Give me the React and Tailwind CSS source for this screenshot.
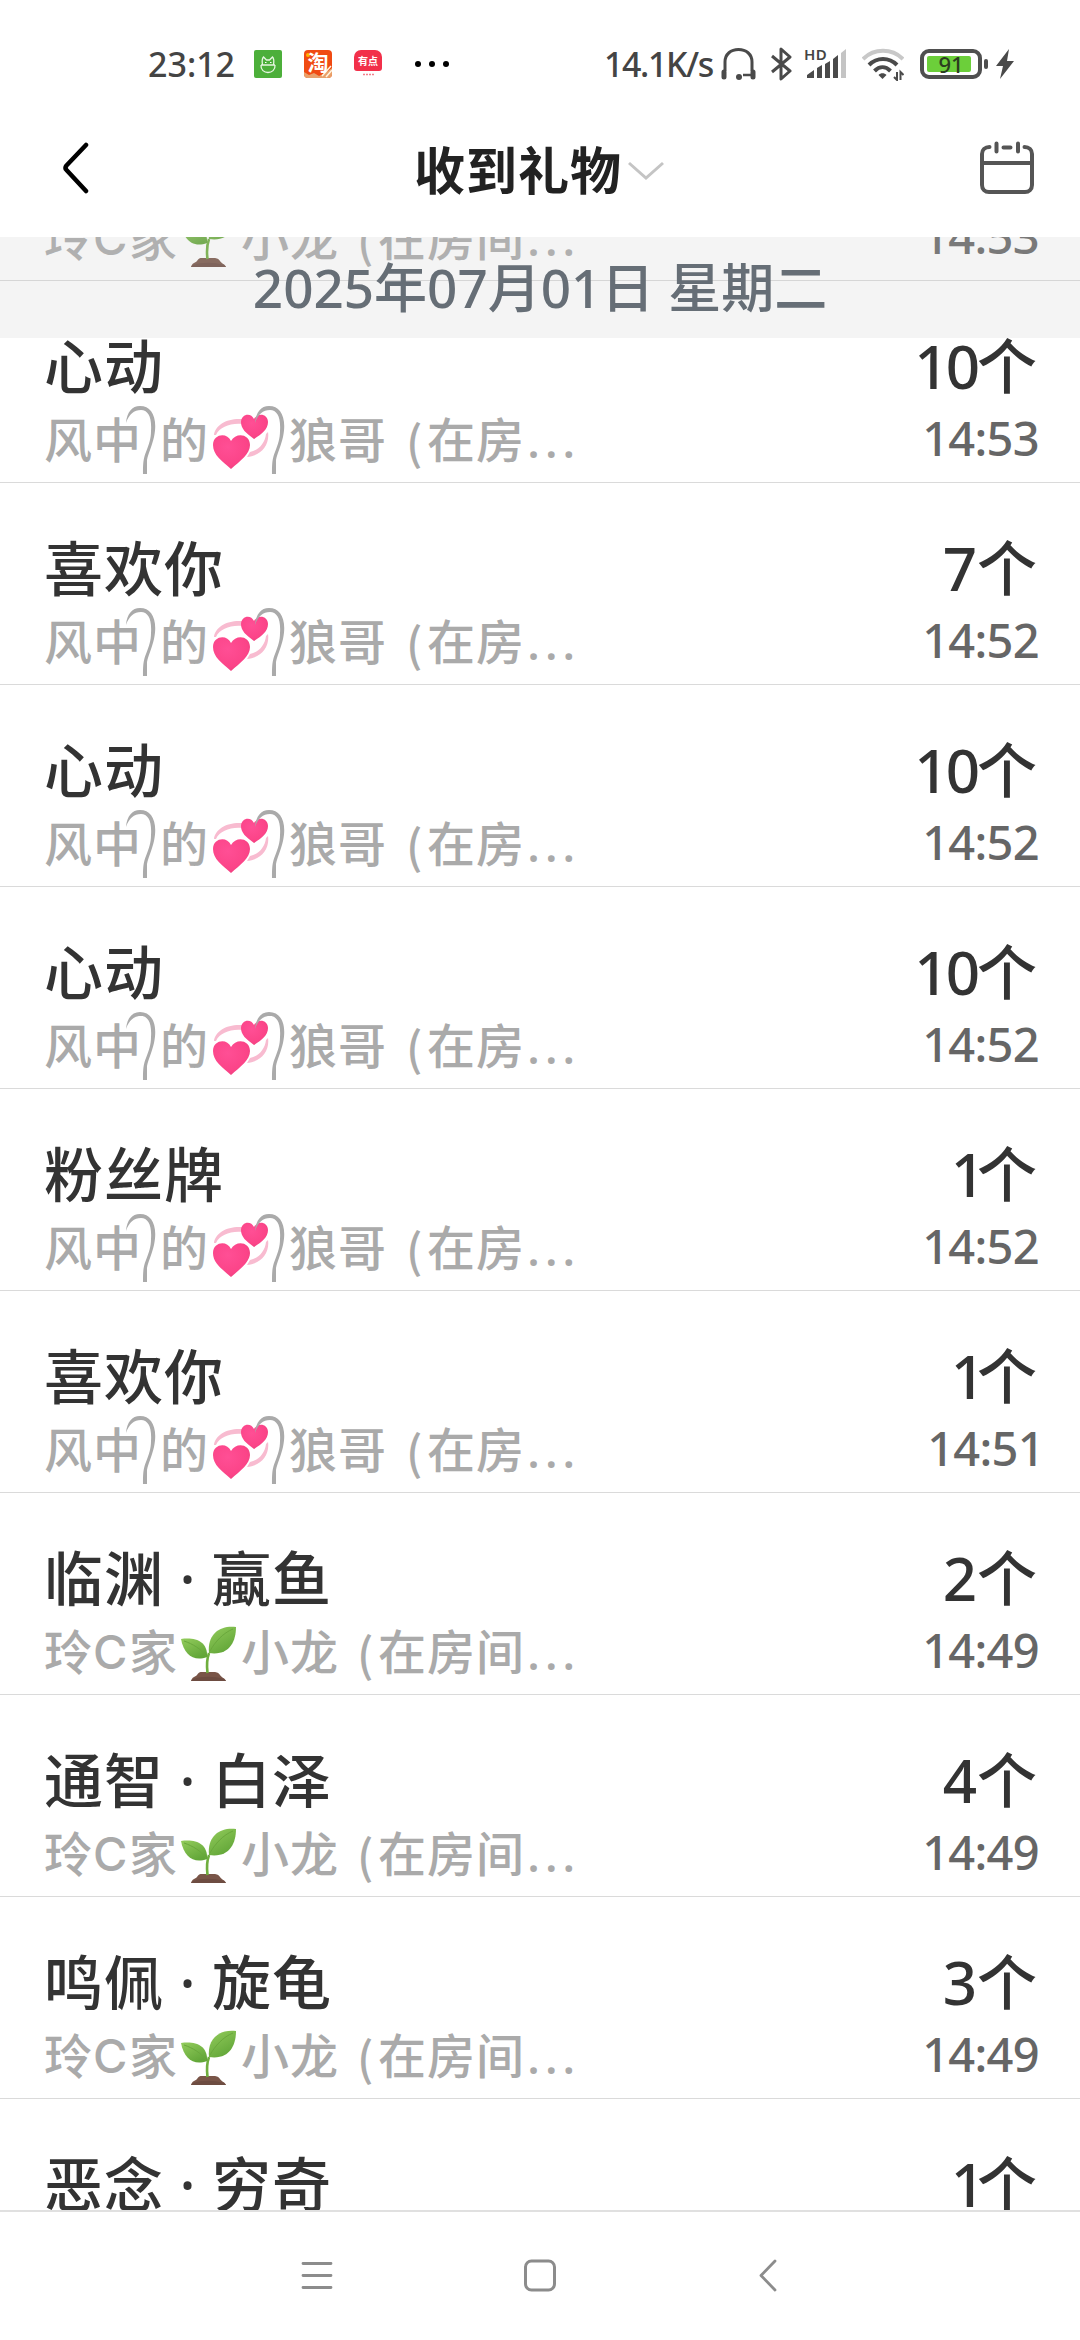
import clsx from 'clsx'

const WOLF = 'wolf'
const DRAGON = 'dragon'

const GIFTS = [
  { name: '心动', count: 1, time: '14:53', from: DRAGON },
  { name: '心动', count: 10, time: '14:53', from: WOLF },
  { name: '喜欢你', count: 7, time: '14:52', from: WOLF },
  { name: '心动', count: 10, time: '14:52', from: WOLF },
  { name: '心动', count: 10, time: '14:52', from: WOLF },
  { name: '粉丝牌', count: 1, time: '14:52', from: WOLF },
  { name: '喜欢你', count: 1, time: '14:51', from: WOLF },
  { name: '临渊·蠃鱼', count: 2, time: '14:49', from: DRAGON },
  { name: '通智·白泽', count: 4, time: '14:49', from: DRAGON },
  { name: '鸣佩·旋龟', count: 3, time: '14:49', from: DRAGON },
  { name: '恶念·穷奇', count: 1, time: '14:48', from: DRAGON },
]

function Hearts() {
  return (
    <svg viewBox="0 0 56 56" className="absolute left-[4px] top-[4px] w-[56px] h-[56px]">
      <defs>
        <radialGradient id="heart" cx="0.4" cy="0.35" r="0.75">
          <stop offset="0" stopColor="#ff4f95" />
          <stop offset="0.7" stopColor="#fb4488" />
          <stop offset="1" stopColor="#e8407c" />
        </radialGradient>
      </defs>
      <path d="M1 21C2 11 14 4 29 5v5C17 9 7 13 3 21z" fill="#f8bbd0" />
      <path d="M55 18c2 13-7 24-21 25l3-5c9-2 15-9 16-18z" fill="#f8bbd0" />
      <path d="M41 25C33 19 28 15 28 8c0-8 10-10 13-3 4-7 14-5 14 3 0 7-6 12-14 17z" fill="url(#heart)" />
      <path d="M18 55C9 47 0 41 0 31c0-11 14-13 18-4 5-9 19-7 19 4 0 9-10 16-19 24z" fill="url(#heart)" />
    </svg>
  )
}

function Sprout() {
  return (
    <svg viewBox="0 0 56 56" className="absolute left-[3px] top-[4px] w-[56px] h-[56px]">
      <defs>
        <linearGradient id="leaf" x1="0" y1="0" x2="0.6" y2="1">
          <stop offset="0" stopColor="#93cc5c" />
          <stop offset="1" stopColor="#62a638" />
        </linearGradient>
      </defs>
      <path d="M10 55c1-4 4-4 6-6 2-4 5-3 8-3h8c3 0 5 0 7 3 2 3 5 3 6 6z" fill="#795548" />
      <path d="M12 53c9-3 20-3 31 0l2 2H10z" fill="#6d4c41" />
      <path d="M26.500 47c-1-8-1-13 1.500-20" fill="none" stroke="#6fae3e" strokeWidth="2.600" />
      <path d="M0 13c14-2 27 2 26 18-13 5-23-2-26-18z" fill="url(#leaf)" />
      <path d="M28 27C26 8 39-1 55 1c0 15-7 29-27 26z" fill="url(#leaf)" />
      <path d="M3 15c9 3 17 8 22 15M29 25C34 16 42 7 52 3" fill="none" stroke="#6aa83c" strokeWidth="1" />
    </svg>
  )
}

function Hook() {
  return (
    <span className="relative w-[18px] h-full">
      <svg viewBox="0 0 30 70" className="absolute z-10 -left-[16px] -top-[4px] w-[30px] h-[70px]">
        <path d="M0 17C1 6 6 0 14 0c12 0 18 12 14 31-2 9-6 17-7 23v14h-4c0-9 0-15 3-22 3-8 5-13 5-21C26 11 22 4 15 4 8 4 3 8 0 17z" fill="#aaa" />
      </svg>
    </span>
  )
}

function Paren() {
  return <span className="w-[38px] pl-[17px] font-['Noto_Sans_CJK_SC'] text-[46px]">(</span>
}

function Dots() {
  return <span className="pl-px tracking-[4.6px]">...</span>
}

function WolfName() {
  return (
    <>
      <span className="w-[98px]">风中</span>
      <Hook />
      <span className="w-[49px]">的</span>
      <span className="relative w-[62px] h-full"><Hearts /></span>
      <Hook />
      <span className="w-[100px]">狼哥</span>
      <Paren />
      <span className="w-[99px]">在房</span>
      <Dots />
    </>
  )
}

function DragonName() {
  return (
    <>
      <span className="w-[49px]">玲</span>
      <span className="w-[36px] font-['Inter'] text-[47px]">C</span>
      <span className="w-[49px]">家</span>
      <span className="relative w-[63px] h-full"><Sprout /></span>
      <span className="w-[99px]">小龙</span>
      <Paren />
      <span className="w-[148px]">在房间</span>
      <Dots />
    </>
  )
}

function GiftRow({ gift }) {
  const [head, tail] = gift.name.split('·')
  return (
    <li className="flex shrink-0 justify-between h-[202px] pl-[44px] pr-[43px] border-b border-[#dadada]">
      <div className="pt-[53px]">
        <div className="flex h-[64px] text-[59px] leading-[64px] tracking-[1px] font-medium text-[#333]">
          <span>{head}</span>
          {tail && <span className="w-[48px] text-center">·</span>}
          {tail && <span>{tail}</span>}
        </div>
        <div className="flex mt-[12px] h-[60px] text-[48px] leading-[60px] tracking-[1px] font-medium text-[#aaa] whitespace-nowrap">
          {gift.from === WOLF ? <WolfName /> : <DragonName />}
        </div>
      </div>
      <div className="flex flex-col items-end pt-[53px]">
        <div className="text-[60px] leading-[64px] font-medium text-[#333]">
          <span className={clsx(gift.count === 10 && 'tracking-[-3px]', gift.count === 1 && 'tracking-[-8px]')}>
            {gift.count}
          </span>
          个
        </div>
        <div
          className={clsx(
            'mt-[10px] text-[47px] leading-[60px] tracking-[-0.7px] font-medium text-[#666]',
            gift.time.endsWith('1') ? '-mr-[7px]' : '-mr-[2px]',
          )}
        >
          {gift.time}
        </div>
      </div>
    </li>
  )
}

function StatusBar() {
  return (
    <div className="flex items-center h-[128px] pl-[148px] pr-[66px] text-[34px] leading-[40px] font-medium text-[#444]">
      <span className="w-[106px]">23:12</span>
      <svg viewBox="0 0 28 28" className="w-[28px] h-[28px]">
        <rect width="28" height="28" rx="2" fill="#4caf3a" />
        <path d="M7 15h14M7 15c-1 10 15 10 14 0M8.500 15c-.5-3 0-7 1-8l3 3h3l3-3c1 1 1.500 5 1 8" fill="none" stroke="#e6f5e0" strokeWidth="1.300" />
        <path d="M11 12.500h1.500M16 12.500h1.500" stroke="#fff" strokeWidth="1.200" />
      </svg>
      <span className="relative ml-[22px] w-[28px] h-[28px] rounded-[4px] overflow-hidden bg-[#f04a12] text-white text-[21px] leading-[24px] font-bold text-center">
        <span className="relative z-10">淘</span>
        <svg viewBox="0 0 28 28" className="absolute inset-0">
          <path d="M0 22l5 3 5-2 5 3 6-3 7-5v10H0z" fill="#e9a06a" />
          <path d="M18 26l9-10M22 27l6-7" stroke="#fff3df" strokeWidth="1.500" />
          <circle cx="4" cy="5" r="2" fill="#ffb300" />
        </svg>
      </span>
      <span className="relative ml-[22px] w-[28px] h-[28px]">
        <span className="block w-[28px] h-[21px] rounded-t-[7px] rounded-b-[3px] bg-[#f2304a] text-white text-[10px] leading-[23px] font-bold text-center">有点</span>
        <svg viewBox="0 0 28 7" className="w-[28px] h-[7px]">
          <path d="M9 3.500h11" stroke="#f2808c" strokeWidth="1.600" strokeDasharray="2 1" />
        </svg>
      </span>
      <svg viewBox="0 0 34 6" className="ml-[33px] w-[34px] h-[6px]">
        <circle cx="3" cy="3" r="3" />
        <circle cx="17" cy="3" r="3" />
        <circle cx="31" cy="3" r="3" />
      </svg>

      <span className="ml-auto w-[117px] tracking-[-1.400px]">14.1K/s</span>
      <svg viewBox="0 0 35 34" className="w-[35px] h-[34px]" fill="none" stroke="#4a4a4a" strokeWidth="3">
        <path d="M4 24V15C4 7 10 2.500 17.500 2.500S31 7 31 15v9" />
        <path d="M3 25v5M32 25v5" strokeWidth="5" strokeLinecap="round" />
        <path d="M31 28h-9" strokeWidth="2.500" />
        <circle cx="18" cy="30" r="3" fill="#4a4a4a" stroke="none" />
      </svg>
      <svg viewBox="0 0 21 34" className="ml-[15px] w-[21px] h-[34px]" fill="none" stroke="#4a4a4a" strokeWidth="3">
        <path d="M1 9l18 15-9 8V2l9 8L1 25" strokeLinejoin="round" />
      </svg>
      <span className="relative ml-[13px] w-[42px] h-[34px]">
        <span className="absolute -left-[1px] top-0 text-[15px] leading-[14px] font-semibold tracking-[0.5px]">HD</span>
        <svg viewBox="0 0 42 34" className="w-[42px] h-[34px]">
          <path d="M2 31v-3l7-5v8zM12 31V21l5-3v13zM20 31V17l5-3v17zM28 31V12l5-4v23z" fill="#4a4a4a" />
          <path d="M36 31V6l5-4v29z" fill="#c4c4c4" />
        </svg>
      </span>
      <svg viewBox="0 0 42 34" className="ml-[15px] w-[42px] h-[34px]" fill="none" strokeWidth="4">
        <path d="M1 12C12 1 30 1 41 12" stroke="#c8c8c8" />
        <path d="M7 18c8-8 20-8 28 0M12.500 24c5-5 11-5 16 0" stroke="#4a4a4a" />
        <path d="M20.500 32l-4-4c2-2.500 6-2.500 8 0z" fill="#4a4a4a" />
        <path d="M35 25v8l-3-3M38.500 33v-8l3 3" stroke="#4a4a4a" strokeWidth="2" />
      </svg>
      <span className="relative ml-[16px] flex items-center justify-center w-[62px] h-[30px] rounded-[9px] border-4 border-[#4f4f4f]">
        <span className="absolute left-[3px] top-[3px] w-[44px] h-[16px] rounded-[2px] bg-[#6ccf3a]" />
        <span className="relative text-[22px] leading-[22px] text-[#2b3d20]">91</span>
      </span>
      <span className="ml-[2px] w-[4px] h-[10px] rounded-[2px] bg-[#4f4f4f]" />
      <svg viewBox="0 0 18 30" className="ml-[8px] w-[18px] h-[30px]">
        <path d="M13 0L0 17h7L4 30l14-18h-7z" fill="#4a4a4a" />
      </svg>
    </div>
  )
}

function Header() {
  return (
    <header className="flex items-center h-[109px] pl-[62px] pr-[45px]">
      <svg viewBox="0 0 28 52" className="mb-[30px] w-[28px] h-[52px]" fill="none" stroke="#000" strokeWidth="4.500" strokeLinecap="round">
        <path d="M24 3L4.500 23.500Q2.500 26 4.500 28L24 49" strokeLinejoin="round" />
      </svg>
      <h1 className="ml-[324px] mb-[26px] text-[51px] leading-[60px] font-bold tracking-[1px] text-[#222]">收到礼物</h1>
      <svg viewBox="0 0 36 20" className="ml-[6px] mb-[24px] w-[36px] h-[20px]" fill="none" stroke="#c4c4c4" strokeWidth="3">
        <path d="M1 2l17 15L35 2" />
      </svg>
      <svg viewBox="0 0 56 56" className="ml-auto mb-[30px] w-[56px] h-[56px]" fill="none" stroke="#555" strokeWidth="4" strokeLinecap="round">
        <path d="M10.500 7C6 7 3 10 3 14v31c0 4 3 7 7 7h36c4 0 7-3 7-7V14c0-4-3-7-7.500-7" />
        <path d="M3 23h50" />
        <path d="M17.500 3.500v8M39 3.500v8M24.500 7.500h7" />
      </svg>
    </header>
  )
}

function NavBar() {
  return (
    <nav className="flex h-[130px] pt-[46px] pl-[300px] border-t-2 border-[#e0e0e0]">
      <svg viewBox="0 0 34 36" className="w-[34px] h-[36px]" stroke="#8c8c8c" strokeWidth="2.800" strokeLinecap="round">
        <path d="M3 5.500h28M3 17.500h28M3 29.500h28" />
      </svg>
      <svg viewBox="0 0 34 36" className="ml-[189px] w-[34px] h-[36px]" fill="none" stroke="#8c8c8c" strokeWidth="3">
        <rect x="2.500" y="3" width="29" height="29" rx="6" />
      </svg>
      <svg viewBox="0 0 20 36" className="ml-[200px] w-[20px] h-[36px]" fill="none" stroke="#8c8c8c" strokeWidth="2.800" strokeLinecap="round" strokeLinejoin="round">
        <path d="M18 3L4 17.500 18 32" />
      </svg>
    </nav>
  )
}

export default function App() {
  return (
    <div className="flex flex-col w-[1080px] h-[2340px] overflow-hidden bg-white font-['Noto_Sans','Noto_Sans_CJK_SC',sans-serif]">
      <StatusBar />
      <Header />

      {/* List, scrolled part of a row under the header */}
      <main className="relative flex-1 min-h-0 overflow-hidden">
        <ul className="flex flex-col -mt-[158px]">
          {GIFTS.map((gift, i) => <GiftRow key={i} gift={gift} />)}
        </ul>

        {/* Pinned date */}
        <div className="absolute inset-x-0 top-0 h-[101px] bg-[#c8c8c8]/20 text-center text-[53px] leading-[102px] font-medium text-[#666e76]">
          2025年07月01日 星期二
        </div>
      </main>

      <NavBar />
    </div>
  )
}
